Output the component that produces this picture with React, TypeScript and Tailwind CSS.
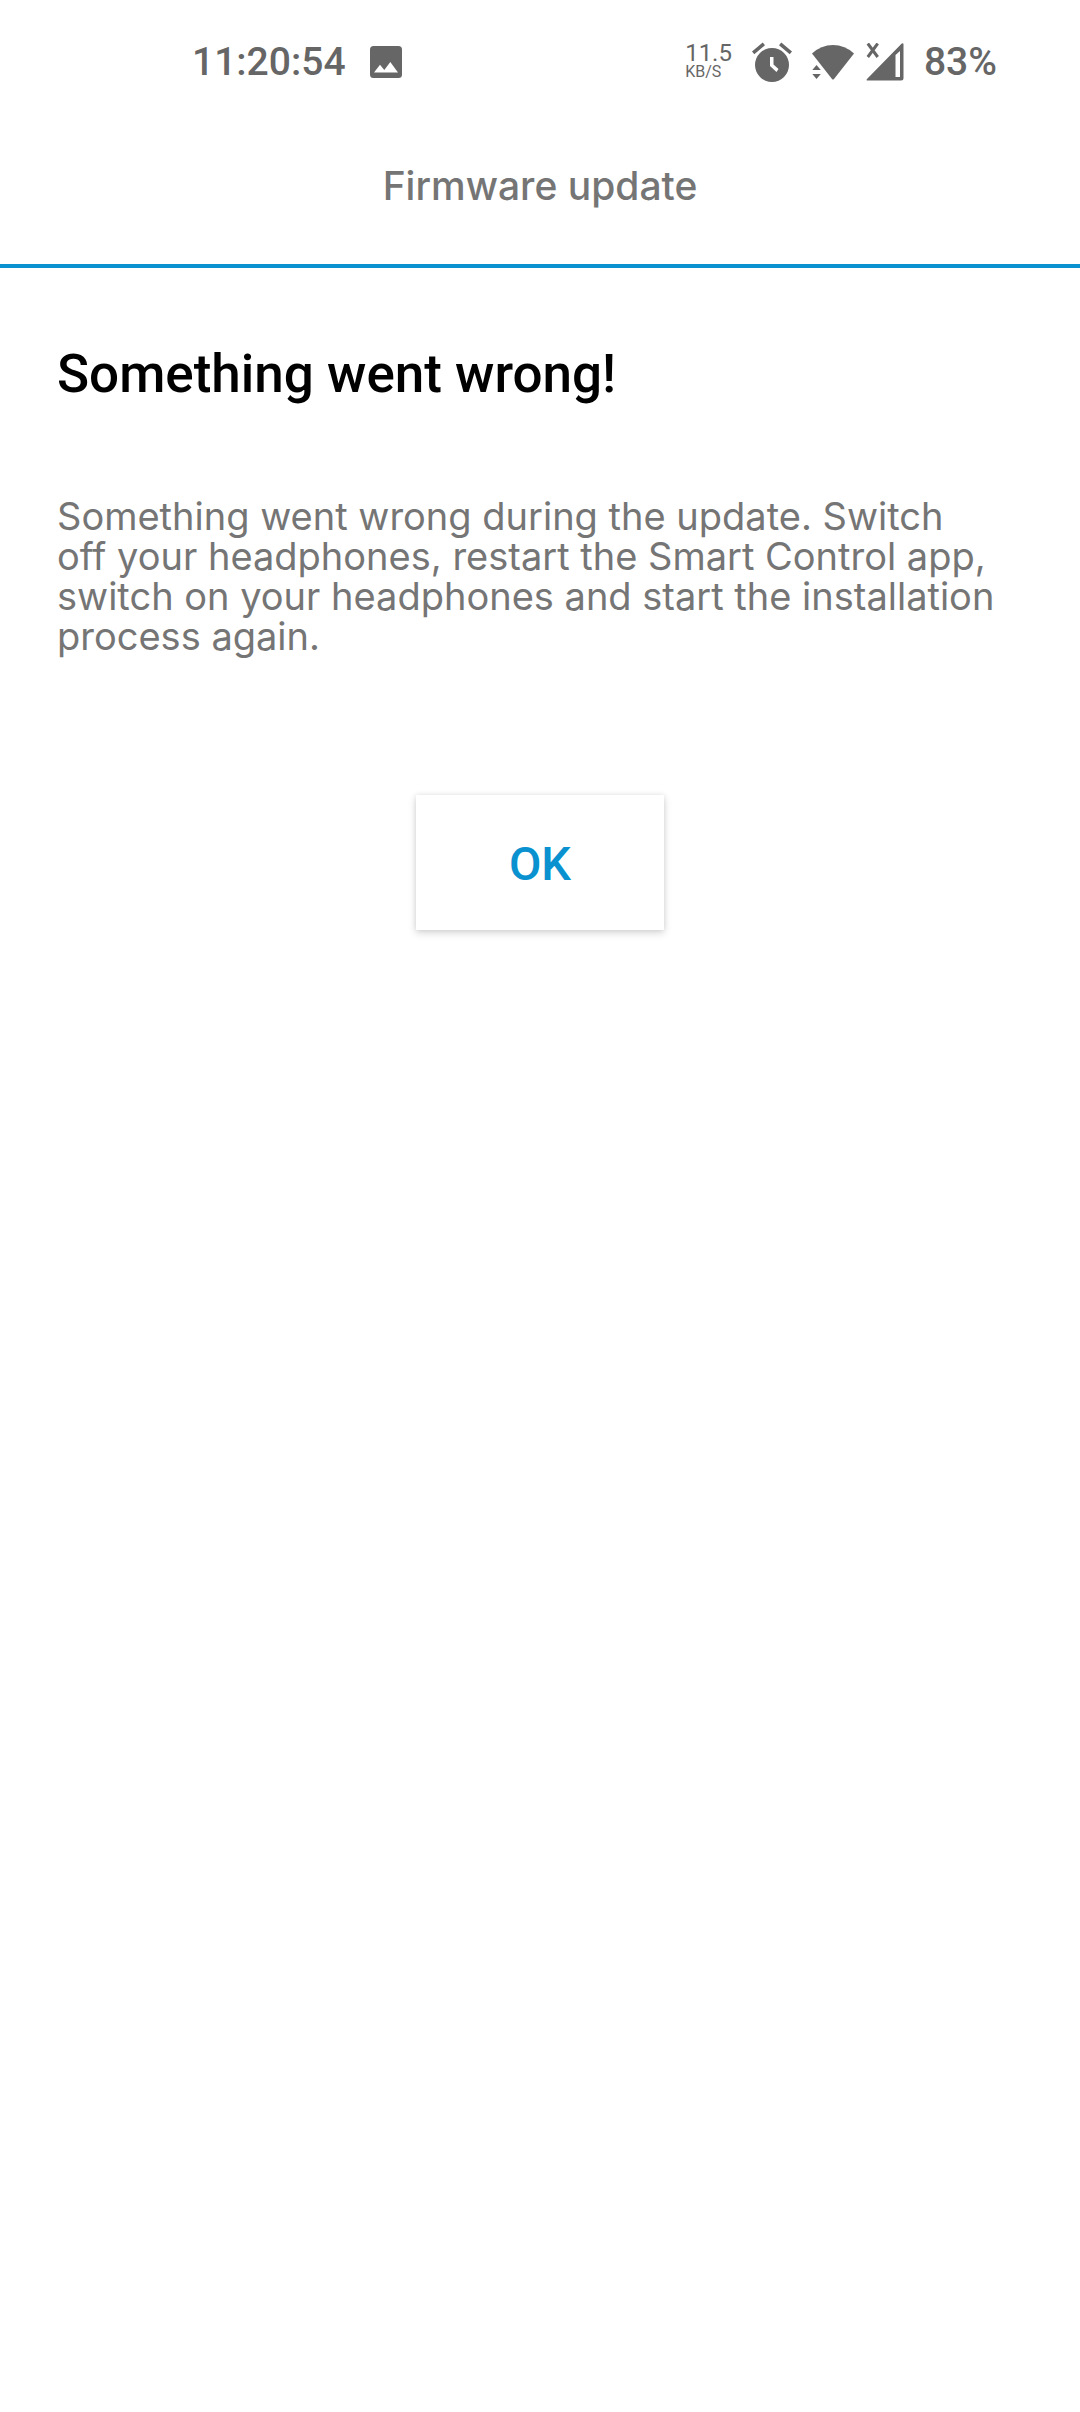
import React from 'react';

function ImageIcon() {
  return (
    <svg viewBox="0 0 32 32" className="size-8" fill="currentColor" aria-hidden="true">
      <path fillRule="evenodd" d="M3.5 0H28.5A3.5 3.5 0 0 1 32 3.5V28.5A3.5 3.5 0 0 1 28.5 32H3.5A3.5 3.5 0 0 1 0 28.5V3.5A3.5 3.5 0 0 1 3.5 0ZM4 26.5H28L20.3 16L14.3 24L10 18.7Z" />
    </svg>
  );
}

function AlarmIcon() {
  return (
    <svg viewBox="0 0 40 40" className="size-10" fill="currentColor" aria-hidden="true">
      <path d="M0 9.5L10.7 .5L13 3.2L2.3 12.2ZM40 9.5L29.3 .5L27 3.2L37.7 12.2Z" />
      <path fillRule="evenodd" d="M20 6A17 17 0 1 0 20 40A17 17 0 1 0 20 6ZM18 15H21.5V22.5L26.5 27L24.5 30L18 24Z" />
    </svg>
  );
}

function WifiIcon() {
  return (
    <svg viewBox="0 0 42 36" className="h-9 w-[42px]" fill="currentColor" aria-hidden="true">
      <path d="M0 9.5Q9 1 21 1T42 9.5L22 35Q21 36 20 35Z" />
      <path d="M4.5 21L8.8 26H.3ZM4.5 35L8.8 30H.3Z" />
    </svg>
  );
}

function SignalIcon() {
  return (
    <svg viewBox="0 0 38 38" className="size-[38px]" fill="currentColor" aria-hidden="true">
      <path fillRule="evenodd" d="M37.5 1.5V35Q37.5 37.5 35 37.5H1.5Q0 37.5 1 36L35.5 .8Q37.5 -.5 37.5 1.5ZM29.5 12V34H34V8Z" />
      <path d="M1.8 .5L11.7 14M11.7 .5L1.8 14" fill="none" stroke="currentColor" strokeWidth="3" />
    </svg>
  );
}

function StatusBar() {
  return (
    <div className="flex h-[124px] items-center justify-between pr-[83px] pl-48 text-[#666666]">
      <div className="flex items-center gap-6">
        <time className="text-[39px] leading-10 font-medium">11:20:54</time>
        <ImageIcon />
      </div>
      <div className="flex items-center">
        <div className="mr-5">
          <div className="text-[24px] leading-5">11.5</div>
          <div className="text-[16px] leading-[18px]">KB/S</div>
        </div>
        <AlarmIcon />
        <div className="ml-5">
          <WifiIcon />
        </div>
        <div className="mr-5 ml-3">
          <SignalIcon />
        </div>
        <span className="text-[39px] leading-10 font-medium">83%</span>
      </div>
    </div>
  );
}

export default function App() {
  return (
    <div className="min-h-screen bg-white font-['Roboto',sans-serif]">
      <StatusBar />
      <header className="border-b-4 border-[#0992cf] pt-[42px] pb-[58px]">
        <h1 className="text-center font-['Inter',sans-serif] text-[39px] leading-10 font-medium text-[#757575]">
          Firmware update
        </h1>
      </header>
      <main className="pt-[76px] pr-[78px] pl-[57px]">
        <h2 className="text-[53px] leading-[60px] font-medium text-black">Something went wrong!</h2>
        <p className="mt-[92px] font-['Inter',sans-serif] text-[38px] leading-10 text-[#757575]">
          Something went wrong during the update. Switch off your headphones, restart the Smart Control app, switch on
          your headphones and start the installation process again.
        </p>
      </main>
      <div className="mt-[139px] flex justify-center">
        <button
          type="button"
          className="h-[135px] w-[248px] bg-white pt-1 text-[47px] font-medium text-[#0992cf] shadow-[0_3px_8px_rgba(0,0,0,0.16),0_0_5px_rgba(0,0,0,0.08)]"
        >
          OK
        </button>
      </div>
    </div>
  );
}
